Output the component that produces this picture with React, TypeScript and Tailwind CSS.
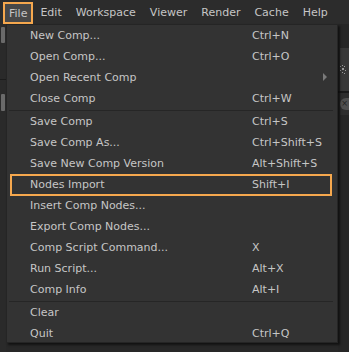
const TEXT = "text-[#c6c6c6]";

type Item = { label: string; shortcut?: string; submenu?: boolean; marked?: boolean };

const groups: Item[][] = [
  [
    { label: "New Comp...", shortcut: "Ctrl+N" },
    { label: "Open Comp...", shortcut: "Ctrl+O" },
    { label: "Open Recent Comp", submenu: true },
    { label: "Close Comp", shortcut: "Ctrl+W" },
  ],
  [
    { label: "Save Comp", shortcut: "Ctrl+S" },
    { label: "Save Comp As...", shortcut: "Ctrl+Shift+S" },
    { label: "Save New Comp Version", shortcut: "Alt+Shift+S" },
    { label: "Nodes Import", shortcut: "Shift+I", marked: true },
    { label: "Insert Comp Nodes..." },
    { label: "Export Comp Nodes..." },
    { label: "Comp Script Command...", shortcut: "X" },
    { label: "Run Script...", shortcut: "Alt+X" },
    { label: "Comp Info", shortcut: "Alt+I" },
  ],
  [
    { label: "Clear" },
    { label: "Quit", shortcut: "Ctrl+Q" },
  ],
];

const menus = ["Edit", "Workspace", "Viewer", "Render", "Cache", "Help"];

function MenuRow({ item }: { item: Item }) {
  return (
    <div className="relative grid grid-cols-[222px_1fr] items-center h-[21px] pl-[23px]">
      <span>{item.label}</span>
      <span>{item.shortcut}</span>
      {item.submenu && (
        <svg className="absolute right-[10px] top-[6px]" width="4" height="8" viewBox="0 0 4 8">
          <polygon points="0,0 4,4 0,8" fill="#7a7a7a" />
        </svg>
      )}
      {item.marked && (
        <div className="absolute left-[3px] right-[5px] top-0 -bottom-[1px] border-2 border-[#f6a84e]" />
      )}
    </div>
  );
}

export default function App() {
  return (
    <div
      className={`w-[349px] h-[352px] overflow-hidden bg-[#282828] text-[11px] leading-none ${TEXT}`}
      style={{ fontFamily: '"DejaVu Sans", Verdana, sans-serif' }}
    >
      {/* menu bar */}
      <div className="flex items-center h-[24px] pl-[3px] bg-[#2c2c2c]">
        <div className="relative flex items-center h-[22px] mt-[2px] px-[6px] bg-[#484848]">
          File
          <div className="absolute inset-0 border-2 border-[#f6a84e]" />
        </div>
        {menus.map((m) => (
          <div key={m} className="px-[7px] h-[22px] flex items-center">
            {m}
          </div>
        ))}
      </div>

      <div className="flex h-[328px]">
        {/* left panel edge */}
        <div className="w-[6px] shrink-0 flex flex-col bg-[#2a2a2a]">
          <div className="h-[3px]" />
          <div className="ml-[1px] w-[4px] h-[16px] bg-[#6a6a6a] rounded-[1px]" />
          <div className="h-[36px]" />
          <div className="h-[1px] bg-[#1c1c1c]" />
          <div className="h-[14px]" />
          <div className="ml-[1px] w-[4px] h-[17px] bg-[#6a6a6a] rounded-[1px]" />
        </div>

        {/* dropdown */}
        <div className="w-[332px] h-[319px] shrink-0 bg-[#333333] border border-[#252525] shadow-[2px_2px_2px_rgba(0,0,0,0.55)] z-10">
          {groups.map((g, gi) => (
            <div key={gi}>
              {gi > 0 && (
                <div className="h-[2px] flex items-center pl-[2px] pr-[4px]">
                  <div className="h-[1px] w-full bg-[#262626]" />
                </div>
              )}
              {g.map((it) => (
                <MenuRow key={it.label} item={it} />
              ))}
            </div>
          ))}
        </div>

        {/* right panel edge */}
        <div className="flex-1 flex flex-col bg-[#262626]">
          <div className="h-[24px]" />
          <div className="h-[43px] ml-[2px] bg-[#383838] flex items-center justify-end pr-[1px]">
            <svg width="8" height="10" viewBox="0 0 8 10">
              <g fill="#9a9a9a">
                <rect x="0" y="1" width="1" height="1" />
                <rect x="2" y="0" width="1" height="1" />
                <rect x="4" y="1" width="1" height="1" />
                <rect x="2" y="3" width="2" height="2" />
                <rect x="0" y="5" width="1" height="1" />
                <rect x="5" y="5" width="1" height="1" />
                <rect x="2" y="7" width="1" height="1" />
                <rect x="4" y="8" width="1" height="1" />
              </g>
            </svg>
          </div>
          <div className="h-[2px] bg-[#1a1a1a]" />
          <div className="h-[22px] ml-[2px] bg-[#2e2e2e] flex items-center justify-end">
            <div className="w-[9px] h-[12px] rounded-l-full bg-[#505050] text-[8px] text-[#222] flex items-center justify-center">
              ×
            </div>
          </div>
        </div>
      </div>
    </div>
  );
}
